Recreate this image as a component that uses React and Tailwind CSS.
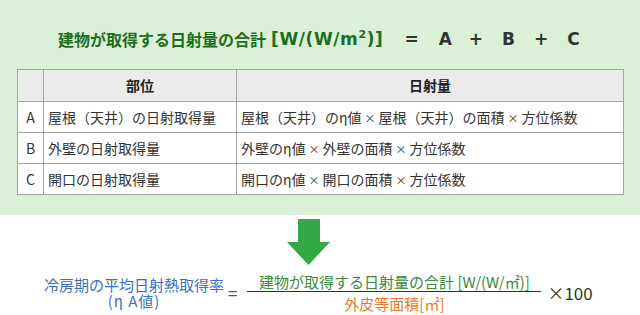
import React from "react";

const jp = { fontFamily: '"Noto Sans CJK JP", "Noto Sans", sans-serif' };
const lat = { fontFamily: '"DejaVu Sans", "Noto Sans CJK JP", sans-serif' };

const X = () => <span className="text-[11px] px-[3px]">×</span>;

export default function App() {
  return (
    <div className="w-[640px] h-[315px] bg-white overflow-hidden" style={jp}>
      <div className="h-[215px] bg-[#daf1d8] pt-[27px]">
        <div className="flex items-center h-[24px] pl-[58px] text-[16px] leading-[24px] font-bold whitespace-nowrap">
          <span className="text-[#1d6e1d]">建物が取得する日射量の合計</span>
          <span className="text-[#1d6e1d] ml-[5px] text-[17px] tracking-[0.6px]" style={lat}>
            [W/(W/m<sup className="text-[11px] relative -top-[7px]">2</sup>)]
          </span>
          <span className="text-[#333] ml-[21px] text-[17px]" style={lat}>=</span>
          <span className="text-[#333] ml-[20px] text-[17px]" style={lat}>A</span>
          <span className="text-[#333] ml-[17px] text-[17px]" style={lat}>+</span>
          <span className="text-[#333] ml-[19px] text-[17px]" style={lat}>B</span>
          <span className="text-[#333] ml-[19px] text-[17px]" style={lat}>+</span>
          <span className="text-[#333] ml-[19px] text-[17px]" style={lat}>C</span>
        </div>
        <table className="ml-[17px] mt-[18px] border-collapse bg-white text-[14px] text-[#333]">
          <thead>
            <tr className="h-[32px] bg-[#ebebeb]">
              <th className="w-[26px] border border-[#a3a3a3]"></th>
              <th className="w-[193px] border border-[#a3a3a3] font-bold text-[#222]">部位</th>
              <th className="w-[387px] border border-[#a3a3a3] font-bold text-[#222]">日射量</th>
            </tr>
          </thead>
          <tbody>
            <tr className="h-[31px]">
              <td className="border border-[#a3a3a3] text-center">A</td>
              <td className="border border-[#a3a3a3] pl-[4px]">屋根（天井）の日射取得量</td>
              <td className="border border-[#a3a3a3] pl-[4px]">屋根（天井）のη値<X />屋根（天井）の面積<X />方位係数</td>
            </tr>
            <tr className="h-[31px]">
              <td className="border border-[#a3a3a3] text-center">B</td>
              <td className="border border-[#a3a3a3] pl-[4px]">外壁の日射取得量</td>
              <td className="border border-[#a3a3a3] pl-[4px]">外壁のη値<X />外壁の面積<X />方位係数</td>
            </tr>
            <tr className="h-[31px]">
              <td className="border border-[#a3a3a3] text-center">C</td>
              <td className="border border-[#a3a3a3] pl-[4px]">開口の日射取得量</td>
              <td className="border border-[#a3a3a3] pl-[4px]">開口のη値<X />開口の面積<X />方位係数</td>
            </tr>
          </tbody>
        </table>
      </div>
      <div className="flex flex-col">
        <svg className="ml-[287px] mt-[4px]" width="43" height="46" viewBox="0 0 43 46">
          <polygon points="11,0 33,0 33,23 43,23 21.5,46 0,23 11,23" fill="#33a846" />
        </svg>
        <div className="flex items-center mt-[8px] pl-[44px] text-[15px] whitespace-nowrap">
          <div className="w-[180px] text-center text-[#3b6fc6] leading-[16px]">
            <div>冷房期の平均日射熱取得率</div>
            <div className="tracking-[1px]">(η A値)</div>
          </div>
          <div className="ml-[4px] text-[#555] text-[17px] leading-[18px]">=</div>
          <div className="ml-[10px] w-[294px] flex flex-col items-center">
            <div className="leading-[18px] text-[#3a8a3a]">建物が取得する日射量の合計 [W/(W/㎡)]</div>
            <div className="w-full border-t border-[#333] pt-[3px] leading-[18px] text-center text-[#ee7a2e]">外皮等面積[㎡]</div>
          </div>
          <div className="ml-[6px] text-[17px] text-[#333] leading-[18px]">×100</div>
        </div>
      </div>
    </div>
  );
}
